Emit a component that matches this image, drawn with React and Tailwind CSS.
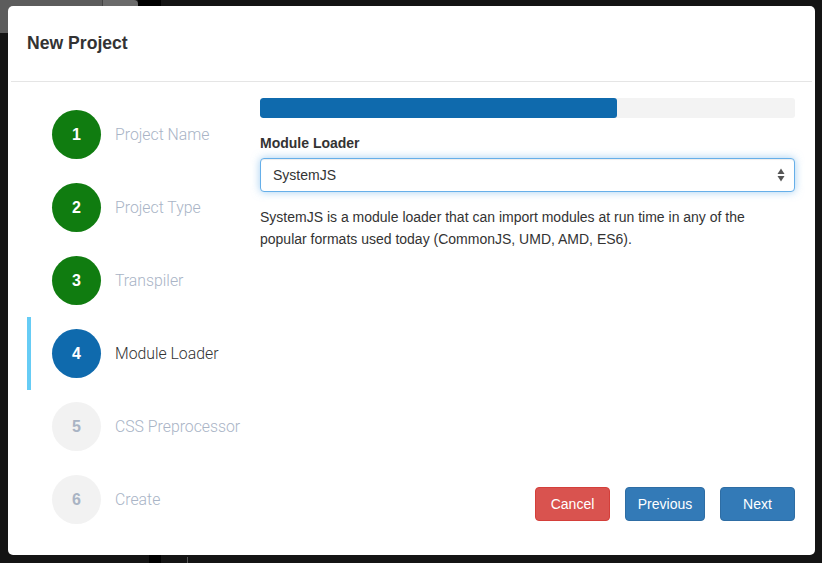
import React from "react";

const steps = [
  { n: 1, label: "Project Name", state: "done" },
  { n: 2, label: "Project Type", state: "done" },
  { n: 3, label: "Transpiler", state: "done" },
  { n: 4, label: "Module Loader", state: "active" },
  { n: 5, label: "CSS Preprocessor", state: "todo" },
  { n: 6, label: "Create", state: "todo" },
];

function Step({ step }) {
  const circle =
    step.state === "done"
      ? "bg-[#107c10] text-white"
      : step.state === "active"
      ? "bg-[#0f6aad] text-white"
      : "bg-[#f2f2f2] text-[#a9b4c4]";
  const label = step.state === "active" ? "text-[#333]" : "text-[#a9b4c6]";
  return (
    <div className="flex h-[73px] items-center">
      <div
        className={`h-full w-1 ${step.state === "active" ? "bg-[#66ccf5]" : "bg-transparent"}`}
      />
      <div
        className={`ml-[21px] flex h-[49px] w-[49px] items-center justify-center rounded-full text-[16px] font-bold ${circle}`}
      >
        {step.n}
      </div>
      <span className={`ml-[14px] font-['Roboto',sans-serif] text-[15.8px] font-light ${label}`}>
        {step.label}
      </span>
    </div>
  );
}

function SelectArrows() {
  return (
    <svg width="8" height="14" viewBox="0 0 8 14" className="text-[#555]">
      <path d="M4 0.5 L7.5 6 L0.5 6 Z" fill="currentColor" />
      <path d="M4 13.5 L7.5 8 L0.5 8 Z" fill="currentColor" />
    </svg>
  );
}

export default function App() {
  return (
    <div className="relative h-[563px] w-[822px] overflow-hidden bg-[#141414] font-['Liberation_Sans',Arial,sans-serif] text-[#333]">
      {/* background window bits behind the dialog */}
      <div className="absolute left-0 top-0 flex h-[33px]">
        <div className="w-[102px] bg-[#5c5c5c]" />
        <div className="w-px bg-[#444]" />
        <div className="w-[35px] rounded-tr-[4px] bg-[#6a6a6a]" />
        <div className="w-[23px] bg-black" />
      </div>
      <div className="absolute bottom-0 left-[149px] h-[8px] w-[12px] bg-black" />
      <div className="absolute bottom-0 left-[187px] h-[6px] w-px bg-[#555]" />

      <div className="relative pl-[8px] pt-[6px]">
        <div className="flex h-[549px] w-[807px] flex-col rounded-[5px] bg-white">
          <div className="flex h-[75px] items-center pl-[19px]">
            <h1 className="text-[17.6px] font-bold text-[#333]">New Project</h1>
          </div>
          <div className="mx-[3px] border-b border-[#e5e5e5]" />

          <div className="flex flex-1 pb-[19px] pl-[19px] pr-[20px] pt-4">
            <div className="w-[233px]">
              {steps.map((s) => (
                <Step key={s.n} step={s} />
              ))}
            </div>

            <div className="flex flex-1 flex-col">
              <div className="h-5 w-full overflow-hidden rounded-[3px] bg-[#f3f3f3]">
                <div className="h-full w-[66.7%] rounded-[3px] bg-[#0f6aad]" />
              </div>

              <label className="mt-[15px] text-[14px] font-bold leading-5 text-[#333]">
                Module Loader
              </label>
              <div className="mt-[5px] flex h-[34px] items-center justify-between rounded-[4px] border border-[#66afe9] bg-white pl-[12px] pr-[9px] shadow-[0_0_8px_rgba(102,175,233,0.6),inset_0_1px_1px_rgba(0,0,0,0.075)]">
                <span className="text-[14px] text-[#333]">SystemJS</span>
                <SelectArrows />
              </div>

              <p className="mt-[14px] text-[14px] leading-[22px] text-[#333]">
                SystemJS is a module loader that can import modules at run time in any of the
                popular formats used today (CommonJS, UMD, AMD, ES6).
              </p>

              <div className="mb-[15px] mt-auto flex justify-end gap-[15px]">
                <button className="h-[34px] w-[75px] rounded-[4px] border border-[#d43f3a] bg-[#d9534f] text-[14px] text-white">
                  Cancel
                </button>
                <button className="h-[34px] w-[80px] rounded-[4px] border border-[#2e6da4] bg-[#337ab7] text-[14px] text-white">
                  Previous
                </button>
                <button className="h-[34px] w-[75px] rounded-[4px] border border-[#2e6da4] bg-[#337ab7] text-[14px] text-white">
                  Next
                </button>
              </div>
            </div>
          </div>
        </div>
      </div>
    </div>
  );
}
